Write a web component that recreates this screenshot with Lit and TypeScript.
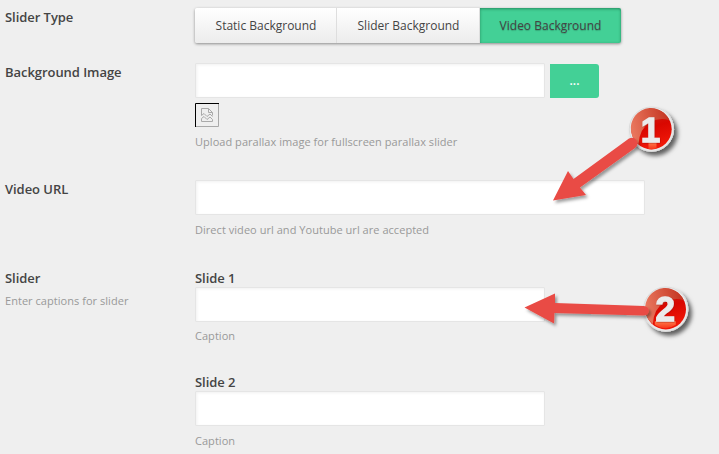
import { LitElement, html, css, svg } from "lit";
import { customElement, property } from "lit/decorators.js";

@customElement("segmented-choice")
class SegmentedChoice extends LitElement {
  @property({ attribute: false }) options: string[] = [];
  @property() selected = "";
  static styles = css`
    :host { display: grid; grid-template-columns: 142px 143px 141px; width: 426px; height: 35px; border-radius: 2px; box-shadow: 0 1px 3px rgba(0,0,0,.42); }
    .option { font: 12px/35px "Open Sans", sans-serif; color: #444; border: 0; padding: 0; margin: 0;
      background: linear-gradient(#fff, #ececec); box-shadow: inset -1px 0 #dedede; white-space: nowrap; }
    .option:first-child { border-radius: 2px 0 0 2px; }
    .option:last-child { border-radius: 0 2px 2px 0; }
    .active { background: #43d096; box-shadow: inset 0 1px 3px rgba(0,60,30,.45); text-shadow: 0 1px 1px rgba(0,0,0,.2); }
  `;
  render() {
    return this.options.map((o) => html`<button class="option ${o === this.selected ? "active" : ""}">${o}</button>`);
  }
}

@customElement("callout-layer")
class CalloutLayer extends LitElement {
  static styles = css`
    :host { position: absolute; inset: 0; pointer-events: none; }
    .canvas { display: block; }
    .num { font: 700 35px "Liberation Sans", sans-serif; fill: #ebebeb; stroke: #ebebeb; stroke-width: 1.3; text-anchor: middle; filter: url(#soft); }
  `;
  badge(n: number, x: number, y: number) {
    return svg`<g transform="translate(${x} ${y})">
      <circle r="22.5" fill="#e9e9e9" filter="url(#drop)"/>
      <circle r="22.2" fill="none" stroke="#d5d5d5" stroke-width=".7"/>
      <circle r="20.2" fill="url(#red)"/>
      <path d="M-17.500 10A20.2 20.2 0 1 1 18-9Q8-12-1-7Q-12-1-13 15Z" fill="url(#shine)"/>
      ${n === 1
        ? svg`<path d="M-3 13H5V19.300Q1 20.300-3 19.700Z" fill="url(#glow)"/>`
        : svg`<path d="M-11 12H10V15.500Q5 19 0 19Q-6 19-11 15.500Z" fill="url(#glow)"/>`}
      <text class="num" x=${n === 1 ? -1 : -0.7} y=${n === 1 ? 13 : 12}>${n}</text>
    </g>`;
  }
  render() {
    return html`<svg class="canvas" width="719" height="454" viewBox="0 0 719 454">
      <defs>
        <filter id="drop" x="-40%" y="-40%" width="200%" height="200%"><feDropShadow dx="3.5" dy="4" stdDeviation="2.3" flood-color="#000" flood-opacity=".6"/></filter>
        <filter id="arrow" filterUnits="userSpaceOnUse" x="500" y="90" width="219" height="300"><feDropShadow dx="2" dy="2.5" stdDeviation="1.7" flood-color="#000" flood-opacity=".38"/></filter>
        <filter id="soft"><feDropShadow dx=".5" dy=".6" stdDeviation=".6" flood-color="#800" flood-opacity=".5"/></filter>
        <linearGradient id="red" x1="0" y1="0" x2=".3" y2="1"><stop stop-color="#c52c1d"/><stop offset=".55" stop-color="#d90700"/><stop offset="1" stop-color="#ef1708"/></linearGradient>
        <linearGradient id="shine" x1="0" y1=".3" x2="1" y2=".1"><stop stop-color="#e8755c"/><stop offset="1" stop-color="#c2321f"/></linearGradient>
        <linearGradient id="glow" x1="0" y1="0" x2="0" y2="1"><stop stop-color="#ff7c4c"/><stop offset="1" stop-color="#f8361a"/></linearGradient>
      </defs>
      ${this.badge(1, 651.5, 129.2)}
      ${this.badge(2, 665.8, 309.2)}
      <g fill="#e94b45" filter="url(#arrow)">
        <path d="M553 200.5L568 171L573.5 179L629 138.5Q634 136 637 141Q638.500 145 635 148L580 187.500L586 195Z"/>
        <path d="M524.500 307.500L555 293.500V303L644 306Q649 307 649 311Q648 315.500 643 315.500L554.500 313L554 323.500Z"/>
      </g>
    </svg>`;
  }
}

@customElement("app-root")
class AppRoot extends LitElement {
  static styles = css`
    :host { display: block; position: relative; width: 719px; height: 454px; overflow: hidden; background: #efefef; font-family: "Open Sans", sans-serif; }
    .form { display: grid; grid-template-rows: 55px 117px 89px 193px; padding: 8px 0 0 5px; }
    .row { display: grid; grid-template-columns: 190px 1fr; align-items: start; }
    .label { font-size: 13px; line-height: 18px; font-weight: 600; color: #444; white-space: nowrap; letter-spacing: -.05px; }
    .note { font-size: 11px; line-height: 16px; color: #999; white-space: nowrap; letter-spacing: .04px; }
    .side { margin-top: 6px; }
    .field { display: block; box-sizing: border-box; width: 350px; height: 35px; margin: 0; padding: 0 8px; border: 1px solid #e5e5e5; background: #fff; border-radius: 1px; box-shadow: inset 1px 1px 3px rgba(0,0,0,.06); outline: 0; }
    .wide { width: 450px; }
    .picker { display: flex; gap: 5px; }
    .browse { width: 49px; height: 34px; margin-top: 1px; padding: 0; border: 0; border-radius: 0 3px 3px 0; background: #43d096; color: #fff; font: 600 12px/34px "Open Sans", sans-serif; }
    .thumb { display: block; margin: 5px 0 7px; }
    .gap { margin-top: 7px; }
    .slides { display: grid; grid-template-rows: 104px 1fr; }
    .first .gap { margin-top: 6px; }
  `;
  slide(n: number) {
    return html`<div class=${n === 1 ? "first" : ""}><div class="label">Slide ${n}</div><input class="field"><div class="note gap">Caption</div></div>`;
  }
  render() {
    return html`
      <div class="form">
        <div class="row">
          <div class="label">Slider Type</div>
          <segmented-choice .options=${["Static Background", "Slider Background", "Video Background"]} selected="Video Background"></segmented-choice>
        </div>
        <div class="row">
          <div class="label">Background Image</div>
          <div>
            <div class="picker"><input class="field"><button class="browse">...</button></div>
            <svg class="thumb" width="24" height="24" fill="none">
              <path d="M23.500 0V23.500H0" stroke="#a9a9a9"/><path d="M.5 24V.5H24" stroke="#000"/>
              <path d="M6.500 12.500V5.500H13.500L17.500 9.500V12.500M13.500 5.500V9.500H17.500M6.500 12.500L9 10.500L12 13.500L15 11L17.500 13.500M6.500 18.500V15.500L9 13.500L12 16.500L15 14L17.500 16.500V18.500H6.500Z" stroke="#aaa"/>
            </svg>
            <div class="note">Upload parallax image for fullscreen parallax slider</div>
          </div>
        </div>
        <div class="row">
          <div class="label">Video URL</div>
          <div><input class="field wide"><div class="note gap">Direct video url and Youtube url are accepted</div></div>
        </div>
        <div class="row">
          <div><div class="label">Slider</div><div class="note side">Enter captions for slider</div></div>
          <div class="slides">${this.slide(1)}${this.slide(2)}</div>
        </div>
      </div>
      <callout-layer></callout-layer>`;
  }
}
